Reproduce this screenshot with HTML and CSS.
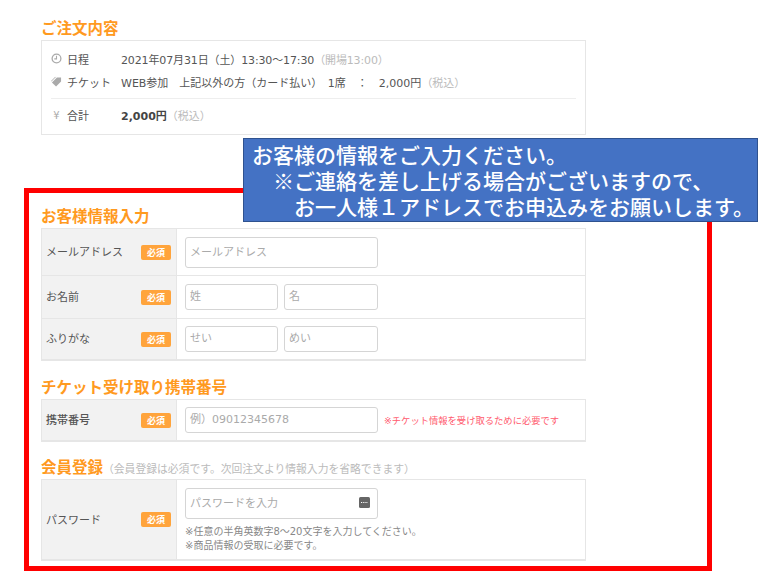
FILE: index.html
```html
<!DOCTYPE html>
<html lang="ja">
<head>
    <meta charset="UTF-8">
    <title>お客様情報入力</title>
    <link rel="stylesheet" href="styles.css">
</head>
<body>
    <div class="page">
        <section class="order">
            <h2 class="title">ご注文内容</h2>
            <div class="order-box">
                <div class="order-row">
                    <svg class="order-icon" viewBox="0 0 12 12"><circle cx="6" cy="6" r="4.8" fill="none" stroke="#aaa" stroke-width="1.4"/><path d="M6 3V6.4H3.6" fill="none" stroke="#aaa" stroke-width="1.2"/></svg>
                    <span class="order-label">日程</span>
                    <span class="date">2021年07月31日（土）13:30～17:30<span class="muted">（開場13:00）</span></span>
                </div>
                <div class="order-row">
                    <svg class="order-icon" viewBox="0 0 12 12"><path d="M1 7L6.5 1.5H11V6L5.5 11.5Z" fill="#aaa"/><path d="M0 6L5 1" stroke="#aaa" stroke-width="1"/></svg>
                    <span class="order-label">チケット</span>
                    <span class="ticket">WEB参加　上記以外の方（カード払い）　1席　：　2,000円<span class="muted">（税込）</span></span>
                </div>
                <div class="order-row order-total">
                    <span class="order-icon yen">¥</span>
                    <span class="order-label">合計</span>
                    <span><b>2,000円</b><span class="muted">（税込）</span></span>
                </div>
            </div>
        </section>

        <div class="callout">
            <div>お客様の情報をご入力ください。</div>
            <div class="indent1">※ご連絡を差し上げる場合がございますので、</div>
            <div class="indent2">お一人様１アドレスでお申込みをお願いします。</div>
        </div>

        <section class="red-frame">
            <h2 class="title">お客様情報入力</h2>
            <div class="form-table">
                <div class="form-row row-email">
                    <div class="form-label"><span>メールアドレス</span><span class="req">必須</span></div>
                    <div class="form-cell"><div class="input wide">メールアドレス</div></div>
                </div>
                <div class="form-row">
                    <div class="form-label"><span>お名前</span><span class="req">必須</span></div>
                    <div class="form-cell"><div class="input half">姓</div><div class="input half">名</div></div>
                </div>
                <div class="form-row">
                    <div class="form-label"><span>ふりがな</span><span class="req">必須</span></div>
                    <div class="form-cell"><div class="input half">せい</div><div class="input half">めい</div></div>
                </div>
            </div>

            <h2 class="title title-ticket">チケット受け取り携帯番号</h2>
            <div class="form-table">
                <div class="form-row">
                    <div class="form-label label-strong"><span>携帯番号</span><span class="req">必須</span></div>
                    <div class="form-cell"><div class="input wide">例）09012345678</div><span class="note-red">※チケット情報を受け取るために必要です</span></div>
                </div>
            </div>

            <h2 class="title title-member">会員登録<span class="title-sub">（会員登録は必須です。次回注文より情報入力を省略できます）</span></h2>
            <div class="form-table">
                <div class="form-row row-password">
                    <div class="form-label"><span>パスワード</span><span class="req">必須</span></div>
                    <div class="form-cell cell-column">
                        <div class="input wide password">パスワードを入力
                            <svg class="key-icon" viewBox="0 0 11 11"><rect width="11" height="11" rx="1.5" fill="#666"/><path d="M2 5.5H9" stroke="#fff" stroke-width="1.2" stroke-dasharray="1.2 1"/></svg>
                        </div>
                        <p class="help">※任意の半角英数字8～20文字を入力してください。<br>※商品情報の受取に必要です。</p>
                    </div>
                </div>
            </div>
        </section>
    </div>
</body>
</html>
```

FILE: styles.css
```css
body {
    margin: 0;
    background: #fff;
    color: #555;
    font-family: "DejaVu Sans", "Noto Sans CJK JP", sans-serif;
    font-size: 11px;
}

.page {
    position: relative;
    width: 770px;
    height: 578px;
    overflow: hidden;
    box-sizing: border-box;
    padding: 17px 0 0 24px;
}

.title {
    margin: 0 0 2px;
    height: 21px;
    line-height: 21px;
    font-family: "Noto Sans CJK JP", sans-serif;
    font-size: 15.5px;
    font-weight: bold;
    color: #ff9a1f;
}

.order {
    width: 545px;
    margin-left: 17px;
}

.order-box {
    height: 95px;
    box-sizing: border-box;
    border: 1px solid #e6e6e6;
    padding: 6px 9px 0;
}

.order-row {
    display: flex;
    align-items: center;
    height: 23px;
    color: #555;
}

.order-total {
    height: 30px;
    margin-top: 5px;
    padding-top: 1px;
    border-top: 1px solid #eee;
}

.order-icon {
    width: 11px;
    height: 11px;
    margin-right: 5px;
    flex: none;
}

.yen {
    color: #aaa;
    font-size: 10px;
    line-height: 11px;
    text-align: center;
}

.order-label {
    width: 54px;
    flex: none;
}

.date {
    letter-spacing: -0.13px;
}

.ticket {
    white-space: pre;
}

.muted {
    color: #bbb;
}

b {
    color: #444;
}

.callout {
    position: absolute;
    left: 243px;
    top: 138px;
    width: 515px;
    height: 84px;
    box-sizing: border-box;
    padding: 2px 0 0 8px;
    background: #4472c4;
    border: 1px solid #2f528f;
    color: #fff;
    font-family: "Noto Sans CJK JP", sans-serif;
    font-size: 21px;
    font-weight: 500;
    line-height: 26px;
    white-space: nowrap;
}

.indent1 {
    padding-left: 21px;
}

.indent2 {
    padding-left: 42px;
}

.red-frame {
    width: 688px;
    height: 383px;
    box-sizing: border-box;
    margin-top: 53px;
    border: 5px solid #f00;
    padding: 12px 0 0 12px;
}

.form-table {
    width: 545px;
    border: 1px solid #e6e6e6;
    border-bottom-width: 2px;
    box-sizing: border-box;
}

.form-row {
    display: flex;
    height: 43px;
    border-bottom: 1px solid #e6e6e6;
    box-sizing: border-box;
}

.form-row:last-child {
    border-bottom: none;
    height: 40px;
}

.row-email {
    height: 47px;
}

.form-row.row-password {
    height: 79px;
}

.form-label {
    display: flex;
    align-items: center;
    justify-content: space-between;
    width: 135px;
    box-sizing: border-box;
    padding: 0 5px 0 4px;
    background: #f2f2f2;
    border-right: 1px solid #e6e6e6;
    font-family: "Noto Sans CJK JP", sans-serif;
    font-size: 11px;
    color: #555;
}

.form-label span:first-child {
    margin-top: -2px;
}

.label-strong span:first-child {
    font-weight: 500;
}

.req {
    width: 30px;
    height: 15px;
    line-height: 15px;
    border-radius: 2px;
    background: #ffa43c;
    color: #fff;
    font-size: 9px;
    font-weight: bold;
    text-align: center;
}

.form-cell {
    display: flex;
    align-items: center;
    gap: 6px;
    padding-left: 8px;
}

.cell-column {
    flex-direction: column;
    align-items: flex-start;
    gap: 0;
    padding-top: 8px;
}

.input {
    box-sizing: border-box;
    height: 26px;
    line-height: 24px;
    padding: 0 4px;
    background: #fff;
    border: 1px solid #d5d5d5;
    border-radius: 3px;
    color: #aaa;
    font-size: 11px;
    white-space: nowrap;
}

.wide {
    width: 193px;
}

.half {
    width: 93px;
}

.half + .half {
    width: 94px;
}

.row-email .input,
.password {
    height: 31px;
    line-height: 29px;
}

.password {
    display: flex;
    align-items: center;
    justify-content: space-between;
    padding-right: 7px;
}

.key-icon {
    width: 11px;
    height: 11px;
    margin-top: -3px;
}

.note-red {
    color: #ff5a6e;
    font-size: 9.3px;
    white-space: nowrap;
}

.help {
    margin: 6px 0 0;
    font-size: 10px;
    line-height: 14px;
    color: #888;
    white-space: nowrap;
}

.title-ticket {
    margin-top: 15px;
}

.title-member {
    margin-top: 14px;
}

.title-sub {
    color: #bbb;
    font-size: 10.8px;
    font-weight: normal;
}
```
